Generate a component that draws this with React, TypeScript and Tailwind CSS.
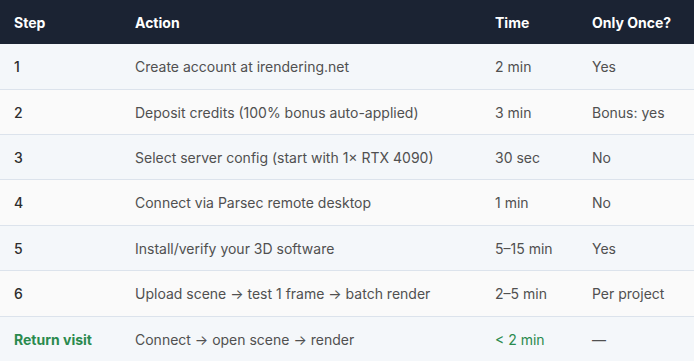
import React from "react";

const rows = [
  ["1", "Create account at irendering.net", "2 min", "Yes", "h-[46px]"],
  ["2", "Deposit credits (100% bonus auto-applied)", "3 min", "Bonus: yes", "h-[45px]"],
  ["3", "Select server config (start with 1× RTX 4090)", "30 sec", "No", "h-[45px]"],
  ["4", "Connect via Parsec remote desktop", "1 min", "No", "h-[46px]"],
  ["5", "Install/verify your 3D software", "5–15 min", "Yes", "h-[45px]"],
  ["6", "Upload scene → test 1 frame → batch render", "2–5 min", "Per project", "h-[46px]"],
];

export default function App() {
  return (
    <div className="w-[694px] h-[361px] bg-white text-[14px]" style={{ fontFamily: "Inter, 'Noto Sans', sans-serif" }}>
      <div className="flex items-center h-[44px] bg-[#1b2333] text-white font-bold">
        <div className="pl-[14px] w-[121px]">Step</div>
        <div className="pl-[14px] w-[360px]">Action</div>
        <div className="pl-[14px] w-[97px]">Time</div>
        <div className="pl-[14px] flex-1">Only Once?</div>
      </div>
      {rows.map((r, i) => (
        <div
          key={i}
          className={`flex items-center border-b border-[#dce3ec] ${r[4]} ${i % 2 === 0 ? "bg-[#f4f7fa]" : "bg-[#fafafa]"}`}
        >
          <div className="pl-[14px] w-[121px] text-[#2d2d2d] font-medium">{r[0]}</div>
          <div className="pl-[14px] w-[360px] text-[#505050]">{r[1]}</div>
          <div className="pl-[14px] w-[97px] text-[#505050]">{r[2]}</div>
          <div className="pl-[14px] flex-1 text-[#505050]">{r[3]}</div>
        </div>
      ))}
      <div className="flex items-center h-[44px] bg-[#f4f7fa]">
        <div className="pl-[14px] w-[121px] text-[#2a8a4e] font-bold">Return visit</div>
        <div className="pl-[14px] w-[360px] text-[#505050]">Connect → open scene → render</div>
        <div className="pl-[14px] w-[97px] text-[#2a8a4e]">&lt; 2 min</div>
        <div className="pl-[14px] flex-1 text-[#505050]">—</div>
      </div>
    </div>
  );
}
